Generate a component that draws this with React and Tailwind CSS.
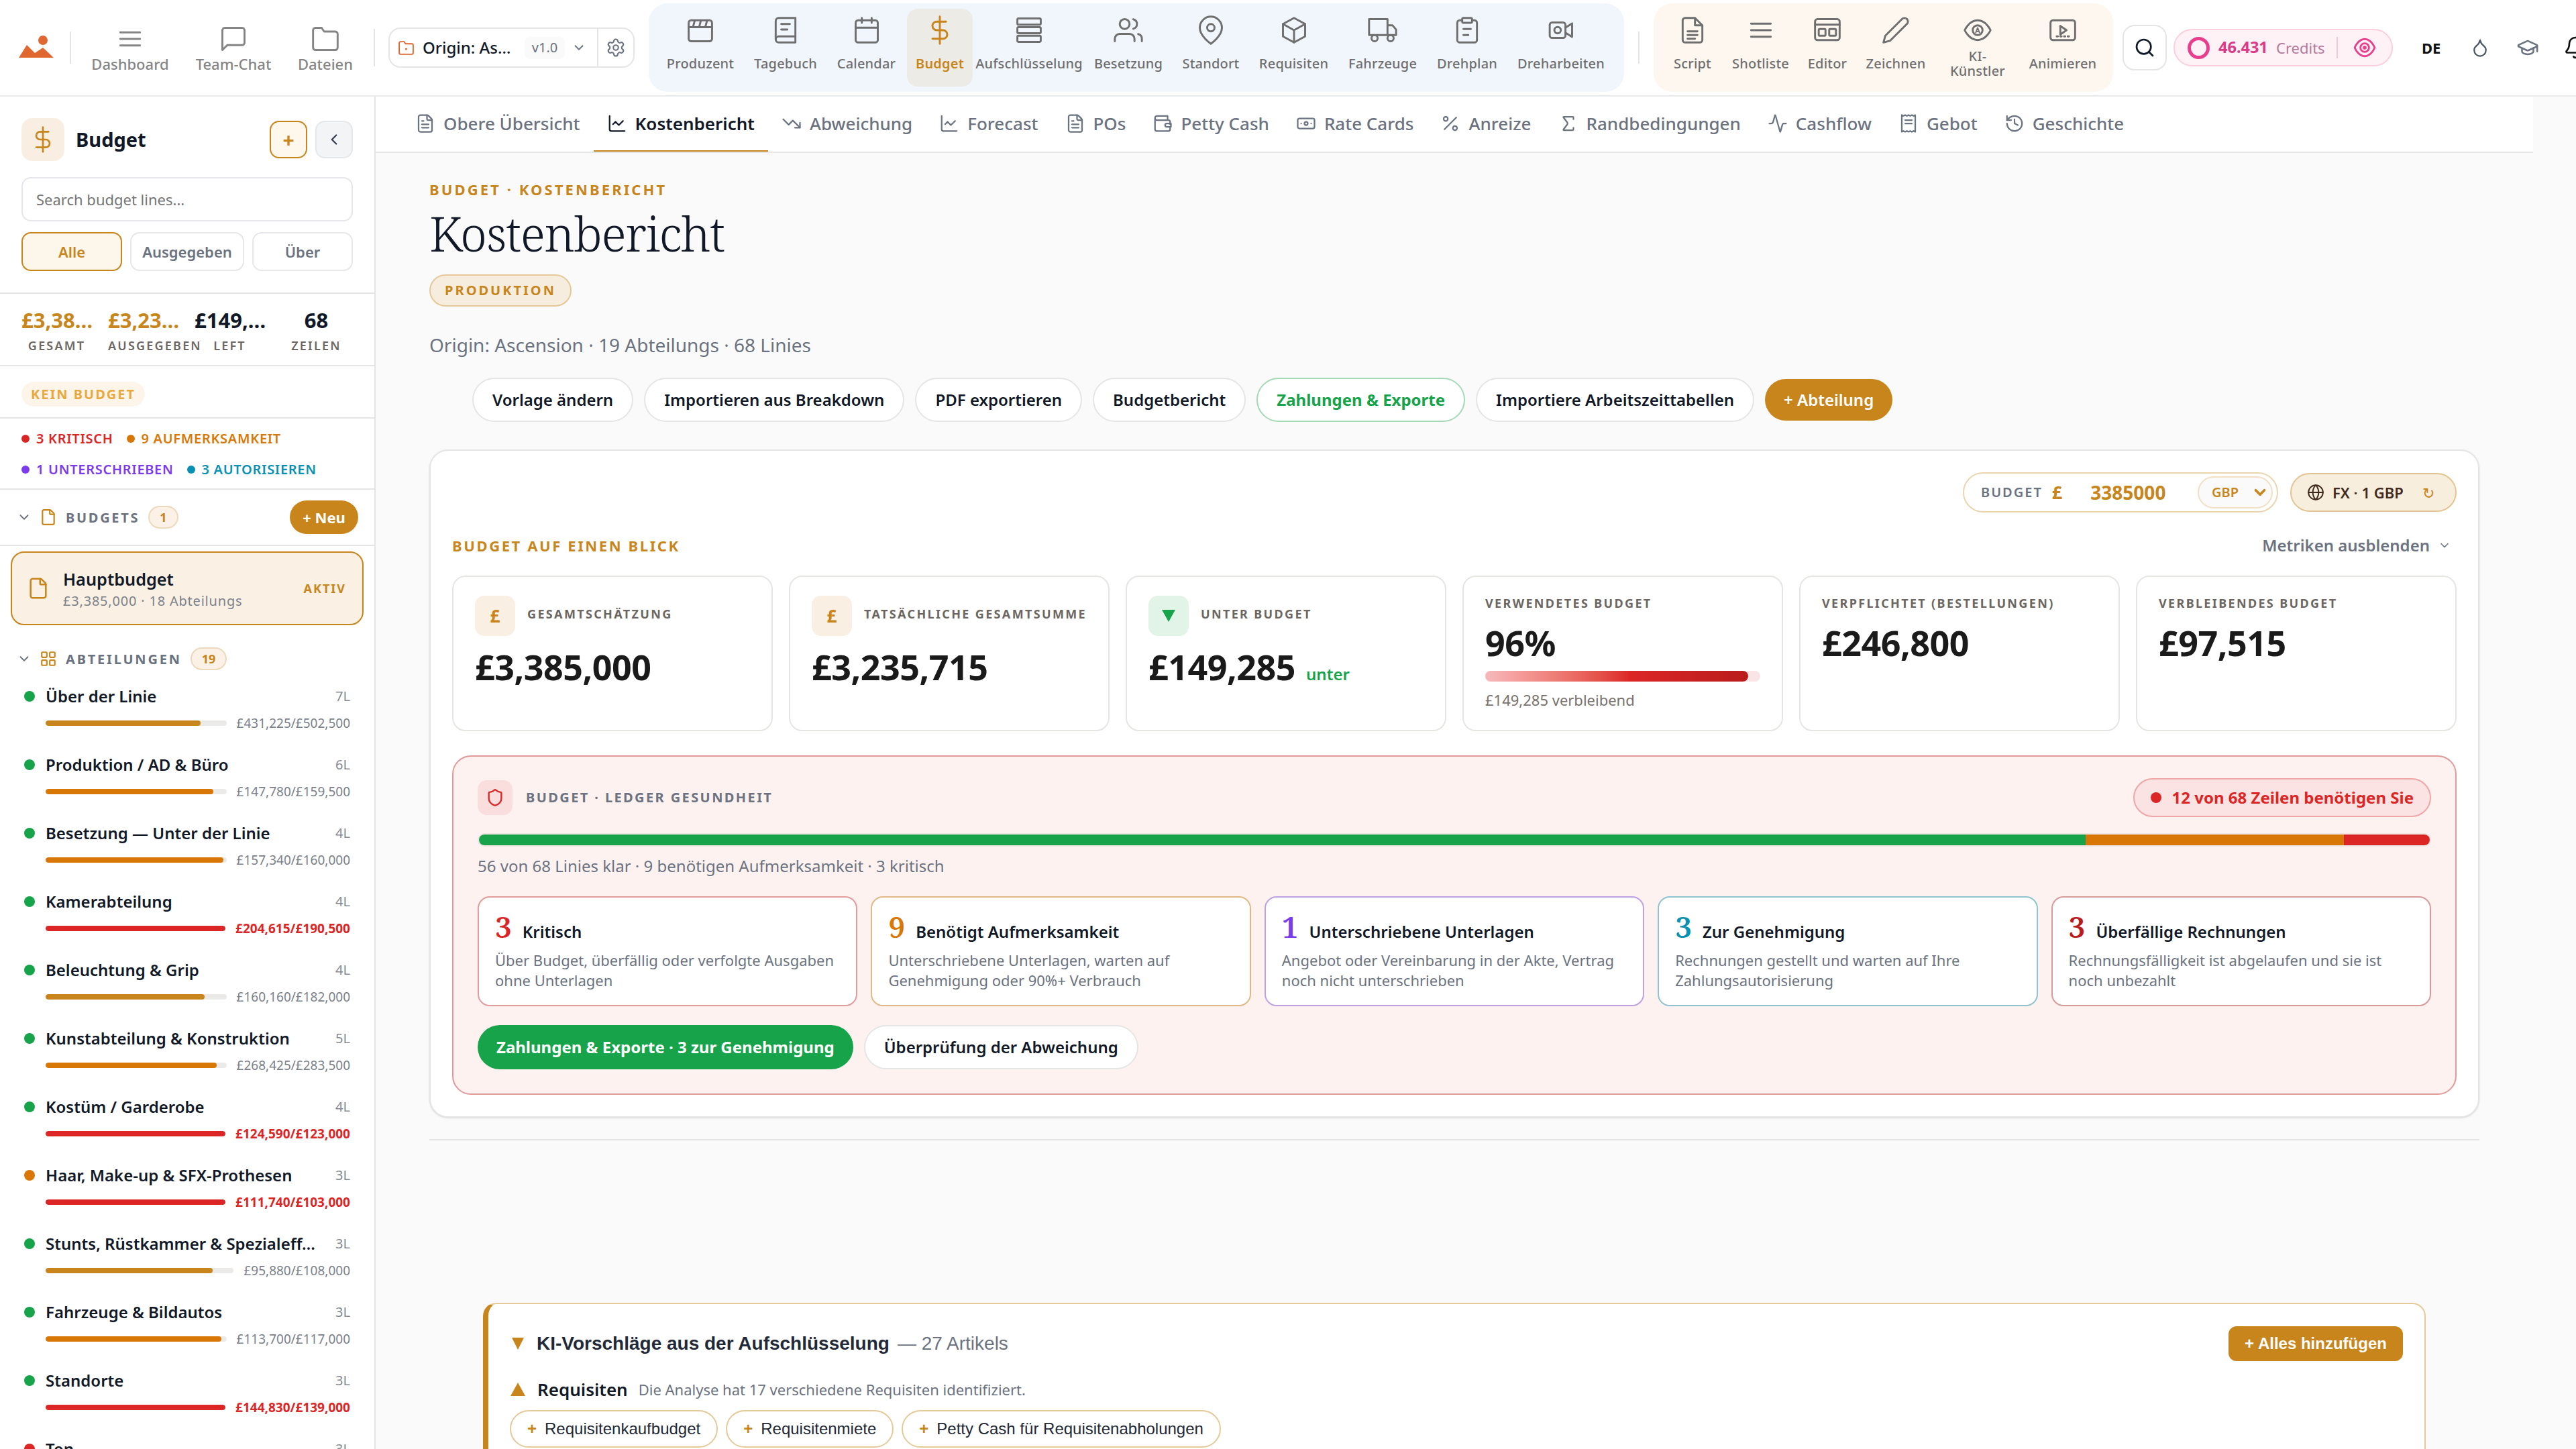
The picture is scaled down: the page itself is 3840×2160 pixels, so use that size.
import {
  Activity, Banknote, Bell, ChartLine, ChevronDown, ChevronLeft, Droplet, File, FileText, Globe, GraduationCap,
  History, LayoutGrid, Percent, Search, Settings, Shield, Sigma, TrendingDown,
} from "lucide-react"
import { cva } from "class-variance-authority"
import clsx from "clsx"

const Svg = ({ size = 44, sw = 1.6, className, children }) => (
  <svg
    width={size}
    height={size}
    viewBox="0 0 24 24"
    fill="none"
    stroke="currentColor"
    strokeWidth={sw}
    strokeLinecap="round"
    strokeLinejoin="round"
    className={clsx("shrink-0", className)}
  >
    {children}
  </svg>
)

const icons = {
  menu: <path d="M4 6.7h16M4 12h16M4 17.3h16" />,
  chat: <path d="M21 15a2 2 0 0 1-2 2H7l-4 4V5a2 2 0 0 1 2-2h14a2 2 0 0 1 2 2z" />,
  folder: <path d="M22 19a2 2 0 0 1-2 2H4a2 2 0 0 1-2-2V5a2 2 0 0 1 2-2h5l2 3h9a2 2 0 0 1 2 2z" />,
  clapper: <><rect x="2.5" y="4" width="19" height="17" rx="2" /><path d="M2.5 9.5h19M7.5 4 6 9.5M12.5 4 11 9.5M17.5 4 16 9.5" /></>,
  book: <><path d="M4 19.5A2.5 2.5 0 0 1 6.5 17H20" /><path d="M6.5 2H20v20H6.5A2.5 2.5 0 0 1 4 19.5v-15A2.5 2.5 0 0 1 6.5 2zM8.5 7h7M8.5 11.5h5" /></>,
  calendar: <><rect x="3" y="4" width="18" height="18" rx="2" /><path d="M16 2v4M8 2v4M3 10h18" /></>,
  dollar: <path d="M12 1v22M17 5H9.5a3.5 3.5 0 0 0 0 7h5a3.5 3.5 0 0 1 0 7H6" />,
  stack: <><rect x="2.5" y="2.5" width="19" height="5" rx="1" /><rect x="2.5" y="9.5" width="19" height="5" rx="1" /><rect x="2.5" y="16.5" width="19" height="5" rx="1" /></>,
  users: <><path d="M17 21v-2a4 4 0 0 0-4-4H5a4 4 0 0 0-4 4v2" /><circle cx="9" cy="7" r="4" /><path d="M23 21v-2a4 4 0 0 0-3-3.87M16 3.13a4 4 0 0 1 0 7.75" /></>,
  pin: <><path d="M21 10c0 7-9 13-9 13s-9-6-9-13a9 9 0 0 1 18 0z" /><circle cx="12" cy="10" r="3" /></>,
  box: <><path d="m12 2 9 5v10l-9 5-9-5V7z" /><path d="m3 7 9 5 9-5M12 12v10" /></>,
  truck: <><path d="M16 16H1V3h15v13zM16 8h4l3 3.5V16h-7" /><circle cx="5.5" cy="18.5" r="2.5" /><circle cx="18.5" cy="18.5" r="2.5" /></>,
  clipboard: <><path d="M16 4h2a2 2 0 0 1 2 2v14a2 2 0 0 1-2 2H6a2 2 0 0 1-2-2V6a2 2 0 0 1 2-2h2" /><rect x="8" y="2" width="8" height="4" rx="1" /><path d="M9 11h6M9 16h4" /></>,
  camera: <><rect x="2.8" y="5.7" width="12.8" height="12.6" rx="2" /><circle cx="9.2" cy="12" r="2.6" /><path d="m15.600 10 5.400-3.500v11L15.600 14" /></>,
  script: <><path d="M14 2H6a2 2 0 0 0-2 2v16a2 2 0 0 0 2 2h12a2 2 0 0 0 2-2V8zM14 2v6h6M8 13h8M8 16h8M8 19h6" /></>,
  editor: <><rect x="2" y="3" width="20" height="17" rx="2" /><path d="M2 7.5h20" /><rect x="5" y="11" width="5.5" height="5.5" rx=".8" /><rect x="13.5" y="11" width="5.5" height="5.5" rx=".8" /></>,
  pen: <path d="M17 3a2.83 2.83 0 1 1 4 4L7.5 20.5 2 22l1.5-5.5z" />,
  eyeA: <><path d="M1.5 12S5 4 12 4s10.5 8 10.5 8-3.5 8-10.5 8S1.5 12 1.5 12z" /><circle cx="12" cy="12" r="4" /><path d="m10.5 14 1.5-4 1.5 4M11 13h2" strokeWidth="1" /></>,
  play: <><rect x="2" y="4" width="20" height="16" rx="2" /><path d="m10 8.5 5 3.5-5 3.5z" /><path d="M7 17h10" strokeDasharray="1 2" /></>,
  eye: <><path d="M1.5 12S5 3 12 3s10.5 9 10.5 9S19 21 12 21 1.5 12 1.5 12z" /><circle cx="12" cy="12" r="4.5" /><circle cx="12" cy="12" r="1" fill="currentColor" /></>,
  wallet: <><path d="M3 5.5V19a2 2 0 0 0 2 2h14a2 2 0 0 0 2-2v-3M3 5.5A2.5 2.5 0 0 1 5.5 3H18v5M3 5.5A2.5 2.5 0 0 0 5.5 8H19a2 2 0 0 1 2 2v3" /><path d="M17 12h5v4h-5a2 2 0 0 1 0-4z" /></>,
  receipt: <><path d="M4 2v20l2-1 2 1 2-1 2 1 2-1 2 1 2-1 2 1V2l-2 1-2-1-2 1-2-1-2 1-2-1-2 1zM8 8h8M8 12h8" /></>,
}

const mainNav = [
  { label: "Produzent", icon: "clapper", width: "w-[126px]" },
  { label: "Tagebuch", icon: "book", width: "w-[120px]" },
  { label: "Calendar", icon: "calendar", width: "w-[113px]" },
  { label: "Budget", icon: "dollar", width: "w-[98px]", active: true },
  { label: "Aufschlüsselung", icon: "stack", width: "w-[160px]" },
  { label: "Besetzung", icon: "users", width: "w-[128px]" },
  { label: "Standort", icon: "pin", width: "w-[110px]" },
  { label: "Requisiten", icon: "box", width: "w-[129px]" },
  { label: "Fahrzeuge", icon: "truck", width: "w-[128px]" },
  { label: "Drehplan", icon: "clipboard", width: "w-[116px]" },
  { label: "Dreharbeiten", icon: "camera", width: "w-[156px]" },
]

const creativeNav = [
  { label: "Script", icon: "script", width: "w-[88px]" },
  { label: "Shotliste", icon: "menu", width: "w-[107px]" },
  { label: "Editor", icon: "editor", width: "w-[84px]" },
  { label: "Zeichnen", icon: "pen", width: "w-[112px]" },
  { label: "KI-\nKünstler", icon: "eyeA", width: "w-[124px]" },
  { label: "Animieren", icon: "play", width: "w-[122px]" },
]

const NavItem = ({ label, icon, width, active }) => (
  <div
    className={clsx(
      "flex h-[116px] shrink-0 flex-col items-center gap-1.5 rounded-2xl pt-2.5",
      width,
      active ? "bg-[#edebe5] text-[#c8851b]" : "text-[#6f6f6f]"
    )}
  >
    <Svg>{icons[icon]}</Svg>
    <div
      className={clsx(
        "flex h-11 items-center text-center text-[20px] leading-[22px] tracking-[.2px] whitespace-pre",
        active ? "font-semibold" : "font-medium"
      )}
    >
      {label}
    </div>
  </div>
)

const TopLink = ({ label, icon, className }) => (
  <div className={clsx("flex flex-col items-center pt-1 text-[22px] leading-[30px] font-medium text-[#858585]", className)}>
    <Svg>{icons[icon]}</Svg>
    {label}
  </div>
)

const Header = () => (
  <header className="flex h-36 w-[3900px] shrink-0 items-center border-b-2 border-[#e8eaec] bg-white">
    <svg width="52" height="34" viewBox="0 0 52 34" className="mt-[-2px] ml-7 shrink-0" fill="#e0672f">
      <circle cx="36" cy="7" r="7" />
      <path d="M0 33 12 14 24 26 36 18 52 33z" />
    </svg>
    <div className="ml-6 h-12 w-0.5 bg-[#e5e5e5]" />
    <TopLink label="Dashboard" icon="menu" className="ml-[29px] w-[118px]" />
    <TopLink label="Team-Chat" icon="chat" className="ml-[36px] w-[118px]" />
    <TopLink label="Dateien" icon="folder" className="ml-[35px] w-[86px]" />
    <div className="ml-[29px] h-14 w-0.5 bg-[#e5e5e5]" />

    <div className="ml-5 flex h-[60px] w-[367px] shrink-0 items-center rounded-[18px] border-2 border-[#e5e5e5]">
      <Svg size={25} sw={1.8} className="ml-3 text-[#e0672f]">
        {icons.folder}
        <circle cx="12" cy="13.5" r=".6" />
      </Svg>
      <span className="ml-3 w-[152px] text-[24px] font-medium whitespace-nowrap text-[#111827]">Origin: As…</span>
      <span className="flex h-[33px] w-[60px] items-center justify-center rounded-lg bg-[#fafafa] text-[20px] text-[#6b7280]">v1.0</span>
      <ChevronDown size={22} className="ml-2.5 text-[#6b7280]" />
      <div className="ml-auto flex h-full w-[54px] items-center justify-center border-l-2 border-[#e5e5e5]">
        <Settings size={30} strokeWidth={1.7} className="text-[#6b7280]" />
      </div>
    </div>

    <nav className="ml-[21px] flex h-[132px] w-[1454px] shrink-0 gap-1 rounded-[28px] bg-[#f1f6fd] pt-2 pl-3.5">
      {mainNav.map((item) => <NavItem key={item.label} {...item} />)}
    </nav>
    <div className="ml-[21px] h-12 w-0.5 bg-[#e5e5e5]" />
    <nav className="ml-[21px] flex h-[132px] w-[685px] shrink-0 gap-1 rounded-[28px] bg-[#fef7f0] pt-2 pl-3.5">
      {creativeNav.map((item) => <NavItem key={item.label} {...item} />)}
    </nav>

    <div className="ml-3.5 flex h-[68px] w-[66px] shrink-0 items-center justify-center rounded-[18px] border-2 border-[#e5e5e5]">
      <Search size={32} className="text-[#111827]" />
    </div>
    <div className="ml-2.5 flex h-14 w-[327px] shrink-0 items-center rounded-full border-2 border-[#f9cfdf] bg-[#fff2f7]">
      <div className="ml-[19px] size-[33px] rounded-full border-[5px] border-[#e83e8c]" />
      <span className="ml-[13px] w-[75px] text-[23.5px] font-bold text-[#dc3a86]">46.431</span>
      <span className="ml-[11px] w-[73px] text-[22px] text-[#b5799a]">Credits</span>
      <div className="ml-[17px] h-8 w-0.5 bg-[#f5c6da]" />
      <Svg size={34} sw={2} className="ml-[23px] text-[#e83e8c]">{icons.eye}</Svg>
    </div>
    <span className="ml-[43px] text-[22px] font-bold text-[#111]">DE</span>
    <Droplet size={30} className="ml-[44px] shrink-0 text-[#4b5563]" strokeWidth={1.8} />
    <GraduationCap size={34} className="ml-[39px] shrink-0 text-[#6b7280]" strokeWidth={1.8} />
    <Bell size={36} className="ml-[36px] shrink-0 text-[#111]" strokeWidth={1.8} />
  </header>
)

const filters = [
  { label: "Alle", className: "w-[150px] border-[#c8851b] bg-[#fdf6ea] text-[#c8851b]" },
  { label: "Ausgegeben", className: "w-[170px] border-[#e5e7eb] text-[#6b7280]" },
  { label: "Über", className: "w-[150px] border-[#e5e7eb] text-[#6b7280]" },
]

const stats = [
  ["£3,38…", "GESAMT", "text-[#c8851b]"],
  ["£3,23…", "AUSGEGEBEN", "text-[#c8851b]"],
  ["£149,…", "LEFT", "text-[#111827]"],
  ["68", "ZEILEN", "text-[#111827]"],
]

const flags = [
  [
    ["3 KRITISCH", "text-[#dc2626]"],
    ["9 AUFMERKSAMKEIT", "text-[#d97706]"],
  ],
  [
    ["1 UNTERSCHRIEBEN", "text-[#7c3aed]"],
    ["3 AUTORISIEREN", "text-[#0891b2]"],
  ],
]

const departments = [
  { name: "Über der Linie", lines: "7L", spent: 431225, total: 502500 },
  { name: "Produktion / AD & Büro", lines: "6L", spent: 147780, total: 159500 },
  { name: "Besetzung — Unter der Linie", lines: "4L", spent: 157340, total: 160000 },
  { name: "Kamerabteilung", lines: "4L", spent: 204615, total: 190500 },
  { name: "Beleuchtung & Grip", lines: "4L", spent: 160160, total: 182000 },
  { name: "Kunstabteilung & Konstruktion", lines: "5L", spent: 268425, total: 283500 },
  { name: "Kostüm / Garderobe", lines: "4L", spent: 124590, total: 123000 },
  { name: "Haar, Make-up & SFX-Prothesen", lines: "3L", spent: 111740, total: 103000, dot: "bg-[#d97706]" },
  { name: "Stunts, Rüstkammer & Spezialeff…", lines: "3L", spent: 95880, total: 108000 },
  { name: "Fahrzeuge & Bildautos", lines: "3L", spent: 113700, total: 117000 },
  { name: "Standorte", lines: "3L", spent: 144830, total: 139000 },
]

const money = (n) => "£" + n.toLocaleString("en-GB")

const Department = ({ name, lines, spent, total, dot = "bg-[#16a34a]" }) => {
  const ratio = spent ? Math.min(spent / total, 1) : 0
  const over = spent > total
  const color = over ? "bg-[#dc2626]" : ratio >= 0.9 ? "bg-[#d97706]" : "bg-[#c8851b]"

  return (
    <div className="h-[102px] pr-9 pl-9">
      <div className="flex h-10 items-center">
        <span className={clsx("size-4 shrink-0 rounded-full", dot)} />
        <span className="ml-4 text-[24px] font-semibold whitespace-nowrap text-[#111827]">{name}</span>
        <span className="ml-auto text-[20px] text-[#858a93]">{lines}</span>
      </div>
      {spent && (
        <div className="flex h-10 items-center gap-[15px] pl-8">
          <div className="h-2 flex-1 overflow-hidden rounded-full bg-[#ebeae8]">
            <div className={clsx("h-full rounded-full", color)} style={{ width: `${ratio * 100}%` }} />
          </div>
          <span className={clsx("text-[19px]", over ? "font-bold text-[#dc2626]" : "text-[#7b818b]")}>
            {money(spent)}/{money(total)}
          </span>
        </div>
      )}
    </div>
  )
}

const CountBadge = ({ children }) => (
  <span className="ml-[13px] flex h-[34px] min-w-11 items-center justify-center rounded-full border-2 border-[#ecd9bb] bg-[#fbf1e7] px-[15px] text-[18px] font-bold text-[#c8851b]">
    {children}
  </span>
)

const Sidebar = () => (
  <aside className="flex w-[560px] shrink-0 flex-col border-r-2 border-[#e5e5e5] bg-white">
    <div className="h-[294px] shrink-0 border-b-2 border-[#e5e5e5] px-8 pt-8">
      <div className="flex h-16 items-center">
        <div className="flex size-16 items-center justify-center rounded-2xl bg-[#f8efe2] text-[#c8851b]">
          <Svg size={40}>{icons.dollar}</Svg>
        </div>
        <span className="ml-[17px] text-[29px] font-bold text-[#111827]">Budget</span>
        <div className="ml-auto flex size-14 items-center justify-center rounded-[14px] border-2 border-[#c8851b] bg-[#fdf7ec] text-[30px] font-bold text-[#c8851b]">+</div>
        <div className="ml-3 flex size-14 items-center justify-center rounded-[14px] border-2 border-[#e5e7eb] bg-[#f3f4f6] text-[#374151]">
          <ChevronLeft size={26} strokeWidth={2.2} />
        </div>
      </div>
      <div className="mt-6 flex h-[66px] items-center rounded-[14px] border-2 border-[#e5e7eb] px-5 text-[22px] text-[#757575]">
        Search budget lines...
      </div>
      <div className="mt-4 flex gap-3">
        {filters.map((f) => (
          <div key={f.label} className={clsx("flex h-[58px] items-center justify-center rounded-[14px] border-2 text-[22px] font-semibold", f.className)}>
            {f.label}
          </div>
        ))}
      </div>
    </div>

    <div className="grid h-[108px] shrink-0 grid-cols-4 gap-x-6 border-b-2 border-[#e5e5e5] pt-[19px] pr-[34px] pl-8">
      {stats.map(([value, label, color]) => (
        <div key={label} className="min-w-0 text-center">
          <div className={clsx("text-[31px] leading-10 font-bold whitespace-nowrap", color)}>{value}</div>
          <div className="mt-1.5 text-[18px] leading-6 font-semibold tracking-[2.2px] text-[#6b6661]">{label}</div>
        </div>
      ))}
    </div>

    <div className="flex h-[78px] shrink-0 items-center border-b-2 border-[#e5e5e5] px-8 pt-1.5">
      <span className="rounded-full bg-[#fef5ea] px-3.5 text-[20px] leading-[37px] font-bold tracking-[2px] text-[#e8a93f]">KEIN BUDGET</span>
    </div>

    <div className="h-[106px] shrink-0 border-b-2 border-[#e5e5e5] px-8 pt-[7px]">
      {flags.map((row) => (
        <div key={row[0][0]} className="flex h-[46px] items-center gap-5">
          {row.map(([label, color]) => (
            <span key={label} className={clsx("flex items-center gap-2.5 text-[20px] font-semibold tracking-[.7px]", color)}>
              <span className="size-3 rounded-full bg-current" />
              {label}
            </span>
          ))}
        </div>
      ))}
    </div>

    <div className="flex h-[84px] shrink-0 items-center border-b-2 border-[#e5e5e5] pr-6 pl-[25px]">
      <ChevronDown size={22} className="text-[#6b7280]" />
      <File size={26} className="ml-3 text-[#c8851b]" />
      <span className="ml-[13px] pt-0.5 text-[20px] font-bold tracking-[2.7px] text-[#6b7280]">BUDGETS</span>
      <CountBadge>1</CountBadge>
      <span className="ml-auto flex h-[50px] w-[102px] items-center justify-center rounded-full bg-[#c8851b] text-[22px] font-bold text-white">+ Neu</span>
    </div>

    <div className="mx-4 mt-2 flex h-[110px] shrink-0 items-center rounded-[20px] border-2 border-[#c8851b] bg-[#faf0e3] pr-6 pl-[26px]">
      <File size={34} strokeWidth={1.8} className="-ml-1 text-[#c8851b]" />
      <div className="ml-[20px] pt-1">
        <div className="text-[25.3px] leading-[34px] font-semibold text-[#111827]">Hauptbudget</div>
        <div className="text-[20px] leading-8 tracking-[.8px] text-[#7b818b]">£3,385,000 · 18 Abteilungs</div>
      </div>
      <span className="ml-auto text-[18px] font-bold tracking-[2px] text-[#c8851b]">AKTIV</span>
    </div>

    <div className="mt-[25px] flex h-[50px] shrink-0 items-center pl-[25px]">
      <ChevronDown size={22} className="text-[#6b7280]" />
      <LayoutGrid size={26} className="ml-3 text-[#c8851b]" />
      <span className="ml-[13px] pt-0.5 text-[20px] font-bold tracking-[2.8px] text-[#6b7280]">ABTEILUNGEN</span>
      <CountBadge>19</CountBadge>
    </div>

    <div className="mt-[11px]">
      {departments.map((d) => <Department key={d.name} {...d} />)}
      <Department name="Ton" lines="3L" dot="bg-[#dc2626]" />
    </div>
  </aside>
)

const tabs = [
  { label: "Obere Übersicht", icon: FileText },
  { label: "Kostenbericht", icon: ChartLine, active: true },
  { label: "Abweichung", icon: TrendingDown },
  { label: "Forecast", icon: ChartLine },
  { label: "POs", icon: FileText },
  { label: "Petty Cash", svg: "wallet" },
  { label: "Rate Cards", icon: Banknote },
  { label: "Anreize", icon: Percent },
  { label: "Randbedingungen", icon: Sigma },
  { label: "Cashflow", icon: Activity },
  { label: "Gebot", svg: "receipt" },
  { label: "Geschichte", icon: History },
]

const Tabs = () => (
  <div className="flex h-[84px] w-[3216px] border-b-2 border-[#e5e5e5] bg-white pl-[39px]">
    {tabs.map(({ label, icon: Icon, svg, active }) => (
      <div
        key={label}
        className={clsx(
          "flex items-center gap-3 border-b-2 px-5 text-[26px]",
          active ? "border-[#c8851b] font-semibold text-[#111827]" : "border-transparent font-medium text-[#6b7280]"
        )}
      >
        {Icon ? <Icon size={30} strokeWidth={1.8} /> : <Svg size={30} sw={1.8}>{icons[svg]}</Svg>}
        {label}
      </div>
    ))}
  </div>
)

const pill = cva("flex items-center rounded-full px-7 text-[24px] whitespace-nowrap", {
  variants: {
    tone: {
      plain: "h-[66px] border-2 border-[#e5e5e5] bg-white font-semibold text-[#111827]",
      green: "h-[66px] border-2 border-[#a3d9b5] bg-white font-bold text-[#16a34a]",
      greenSolid: "h-[66px] bg-[#16a34a] font-bold text-white",
      gold: "h-[62px] bg-[#c8851b] font-semibold text-white",
    },
  },
})

const PageHead = () => (
  <>
    <div className="text-[22px] leading-8 font-bold tracking-[3.1px] text-[#c8851b]">BUDGET · KOSTENBERICHT</div>
    <h1 className="mt-[4px] font-['Noto_Serif','Noto_Serif_Display',serif] text-[72px] leading-[90px] font-light tracking-[-1.5px] text-[#111827]">
      Kostenbericht
    </h1>
    <div className="mt-[17px] flex h-12 w-[212px] items-center justify-center rounded-full border-2 border-[#e5c898] bg-[#f7edde] text-[20px] font-bold tracking-[3px] text-[#c8851b]">
      PRODUKTION
    </div>
    <div className="mt-[37px] text-[28px] leading-10 text-[#6b7280]">Origin: Ascension · 19 Abteilungs · 68 Linies</div>
    <div className="mt-[29px] flex items-center gap-4 pl-16">
      <div className={pill({ tone: "plain" })}>Vorlage ändern</div>
      <div className={pill({ tone: "plain" })}>Importieren aus Breakdown</div>
      <div className={pill({ tone: "plain" })}>PDF exportieren</div>
      <div className={pill({ tone: "plain" })}>Budgetbericht</div>
      <div className={pill({ tone: "green" })}>Zahlungen & Exporte</div>
      <div className={pill({ tone: "plain" })}>Importiere Arbeitszeittabellen</div>
      <div className={pill({ tone: "gold" })}>+ Abteilung</div>
    </div>
  </>
)

const Metric = ({ symbol, label, value, suffix, green, children }) => (
  <div className={clsx("rounded-[20px] border-2 border-[#e7e5e2] bg-white px-8", symbol ? "pt-7" : "pt-[23px]")}>
    <div className={clsx("flex gap-[18px]", symbol ? "h-[60px] items-start" : "h-8 items-center")}>
      {symbol && (
        <span
          className={clsx(
            "flex size-[60px] items-center justify-center rounded-[14px] text-[26px] font-bold",
            green ? "bg-[#e2f3e8] text-[#16a34a]" : "bg-[#f9f0e3] text-[#c8851b]"
          )}
        >
          {symbol === "▼" ? (
            <svg width="20" height="18" viewBox="0 0 20 18" fill="currentColor"><path d="M0 0h20L10 18z" /></svg>
          ) : symbol}
        </span>
      )}
      <span className={clsx("text-[18px] leading-6 font-bold tracking-[2.35px] whitespace-nowrap text-[#6b6661]", symbol && "pt-[15px]")}>{label}</span>
    </div>
    <div className={clsx("text-[52px] leading-[64px] font-bold tracking-[-.5px] text-[#1a1a1a]", symbol ? "mt-3.5" : "mt-[11px]")}>
      {value}
      {suffix && <span className="ml-4 text-[24px] font-semibold tracking-normal text-[#16a34a]">{suffix}</span>}
    </div>
    {children}
  </div>
)

const health = [
  { n: 3, title: "Kritisch", text: "Über Budget, überfällig oder verfolgte Ausgaben ohne Unterlagen", border: "border-[#e39b9b]", color: "text-[#dc2626]" },
  { n: 9, title: "Benötigt Aufmerksamkeit", text: "Unterschriebene Unterlagen, warten auf Genehmigung oder 90%+ Verbrauch", border: "border-[#e2b984]", color: "text-[#d97706]" },
  { n: 1, title: "Unterschriebene Unterlagen", text: "Angebot oder Vereinbarung in der Akte, Vertrag noch nicht unterschrieben", border: "border-[#bda1e2]", color: "text-[#7c3aed]" },
  { n: 3, title: "Zur Genehmigung", text: "Rechnungen gestellt und warten auf Ihre Zahlungsautorisierung", border: "border-[#8ec4d0]", color: "text-[#0891b2]" },
  { n: 3, title: "Überfällige Rechnungen", text: "Rechnungsfälligkeit ist abgelaufen und sie ist noch unbezahlt", border: "border-[#d99a9a]", color: "text-[#b91c1c]" },
]

const Health = () => (
  <section className="mt-9 h-[506px] rounded-[28px] border-2 border-[#e09a99] bg-[#fef2f1] px-9 pt-8">
    <div className="flex h-[58px] items-center">
      <div className="flex size-[52px] items-center justify-center rounded-[14px] bg-[#fadedd]">
        <Shield size={28} className="text-[#dc2626]" />
      </div>
      <span className="ml-5 text-[20px] font-bold tracking-[2.4px] text-[#6b7280]">BUDGET · LEDGER GESUNDHEIT</span>
      <div className="ml-auto flex h-[58px] items-center gap-4 rounded-full border-2 border-[#efa6a8] bg-[#fbe3e3] px-6 text-[24px] font-bold text-[#dc2626]">
        <span className="size-4 rounded-full bg-current" />
        12 von 68 Zeilen benötigen Sie
      </div>
    </div>
    <div className="mt-6 flex h-5 overflow-hidden rounded-full border-2 border-[#ece5e2]">
      <div className="bg-[#16a34a]" style={{ width: `${(56 / 68) * 100}%` }} />
      <div className="bg-[#d97706]" style={{ width: `${(9 / 68) * 100}%` }} />
      <div className="flex-1 bg-[#dc2626]" />
    </div>
    <div className="mt-[13px] text-[24px] leading-8 text-[#6b7280]">56 von 68 Linies klar · 9 benötigen Aufmerksamkeit · 3 kritisch</div>
    <div className="mt-[29px] grid grid-cols-5 gap-5">
      {health.map((h) => (
        <div key={h.title} className={clsx("h-[164px] rounded-[18px] border-2 bg-white px-6 pt-[15px]", h.border)}>
          <div className="flex h-14 items-baseline gap-4">
            <span className={clsx("font-['Noto_Serif','Noto_Serif_Display',serif] text-[44px] leading-[56px] font-semibold", h.color)}>{h.n}</span>
            <span className="text-[24px] font-semibold text-[#111827]">{h.title}</span>
          </div>
          <div className="mt-[7px] text-[22px] leading-[30px] text-[#6b7280]">{h.text}</div>
        </div>
      ))}
    </div>
    <div className="mt-7 flex gap-4">
      <div className={pill({ tone: "greenSolid" })}>Zahlungen & Exporte · 3 zur Genehmigung</div>
      <div className={pill({ tone: "plain" })}>Überprüfung der Abweichung</div>
    </div>
  </section>
)

const Overview = () => (
  <section className="mt-[41px] h-[996px] rounded-[28px] border-2 border-[#e5e5e5] bg-white px-8 pt-8 shadow-sm">
    <div className="flex h-[60px] items-center justify-end gap-[18px]">
      <div className="flex h-[60px] w-[470px] items-center rounded-full border-2 border-[#ebd5ae] pr-1.5 pl-[25px] text-[#c8851b]">
        <span className="text-[20px] font-semibold tracking-[2px] text-[#6b7280]">BUDGET</span>
        <span className="ml-3.5 text-[27px] font-bold">£</span>
        <span className="ml-[42px] text-[28px] font-bold">3385000</span>
        <div className="ml-auto flex h-12 w-[112px] items-center justify-between rounded-full border-2 border-[#f1e0c5] bg-[#fafafa] pr-1 pl-[19px] text-[20px] font-semibold">
          GBP
          <ChevronDown size={26} strokeWidth={3.5} />
        </div>
      </div>
      <div className="flex h-[58px] w-[248px] items-center rounded-full border-2 border-[#e3c594] bg-[#f8eede] pl-[23px] text-[22px] font-semibold text-[#3f2a1d]">
        <Globe size={26} strokeWidth={1.8} />
        <span className="ml-3">FX · 1 GBP</span>
        <span className="ml-[28px] text-[22px] font-normal text-[#c8851b]">↻</span>
      </div>
    </div>
    <div className="mt-[18px] flex h-[62px] items-center justify-between">
      <span className="text-[22px] font-bold tracking-[2.6px] text-[#c8851b]">BUDGET AUF EINEN BLICK</span>
      <span className="flex items-center gap-3 pr-2 text-[24px] font-semibold text-[#6b7280]">
        Metriken ausblenden
        <ChevronDown size={20} />
      </span>
    </div>
    <div className="mt-3.5 grid h-[232px] grid-cols-6 gap-6">
      <Metric symbol="£" label="GESAMTSCHÄTZUNG" value="£3,385,000" />
      <Metric symbol="£" label="TATSÄCHLICHE GESAMTSUMME" value="£3,235,715" />
      <Metric symbol="▼" green label="UNTER BUDGET" value="£149,285" suffix="unter" />
      <Metric label="VERWENDETES BUDGET" value="96%">
        <div className="mt-2.5 h-4 rounded-full bg-[#fbe4e5]">
          <div className="h-full w-[95.6%] rounded-full bg-linear-to-r from-[#f7b9bc] via-[#dc2626] via-55% to-[#b91c1c]" />
        </div>
        <div className="mt-[11px] text-[22px] leading-8 text-[#78716c]">£149,285 verbleibend</div>
      </Metric>
      <Metric label="VERPFLICHTET (BESTELLUNGEN)" value="£246,800" />
      <Metric label="VERBLEIBENDES BUDGET" value="£97,515" />
    </div>
    <Health />
  </section>
)

const chips = ["Requisitenkaufbudget", "Requisitenmiete", "Petty Cash für Requisitenabholungen"]

const Suggestions = () => (
  <section className="mx-20 mt-[242px] h-[400px] rounded-[20px] border-2 border-l-8 border-[#e5c998] border-l-[#c8851b] bg-white px-8 pt-[33px]">
    <div className="flex h-[52px] items-center font-['Liberation_Sans',sans-serif]">
      <svg width="20" height="18" viewBox="0 0 20 18" className="ml-0.5" fill="#c8851b"><path d="M1 0h18L10 18z" /></svg>
      <span className="ml-[18px] text-[28px] font-bold text-[#1f2937]">KI-Vorschläge aus der Aufschlüsselung</span>
      <span className="ml-3 text-[28px] text-[#6b7280]">— 27 Artikels</span>
      <span className="ml-auto flex h-[52px] w-[260px] items-center justify-center rounded-xl bg-[#c8851b] text-[24px] font-bold text-white">+ Alles hinzufügen</span>
    </div>
    <div className="mt-[22px] flex h-10 items-center">
      <svg width="22" height="20" viewBox="0 0 22 20" className="ml-px" fill="#c8851b"><path d="M0 20h22L11 0z" /></svg>
      <span className="ml-[18px] text-[26px] font-semibold text-[#111827]">Requisiten</span>
      <span className="ml-4 text-[22px] text-[#6b7280]">Die Analyse hat 17 verschiedene Requisiten identifiziert.</span>
    </div>
    <div className="mt-[11px] flex gap-3 font-['Liberation_Sans',sans-serif]">
      {chips.map((c) => (
        <div key={c} className="flex h-14 items-center gap-3 rounded-full border-2 border-[#e5c998] px-6 text-[24px] text-[#1f2937]">
          <span className="font-bold text-[#c8851b]">+</span>
          {c}
        </div>
      ))}
    </div>
  </section>
)

export default function App() {
  return (
    <div className="flex h-[2160px] w-[3840px] flex-col overflow-hidden bg-[#fafafa] font-['Noto_Sans',sans-serif]">
      <Header />
      <div className="flex min-h-0 flex-1">
        <Sidebar />
        <main className="min-w-0 flex-1">
          <Tabs />
          <div className="w-[3136px] pt-[38px] pl-20">
            <PageHead />
            <Overview />
            <div className="mt-8 h-0.5 bg-[#e5e5e5]" />
            <Suggestions />
          </div>
        </main>
      </div>
    </div>
  )
}
